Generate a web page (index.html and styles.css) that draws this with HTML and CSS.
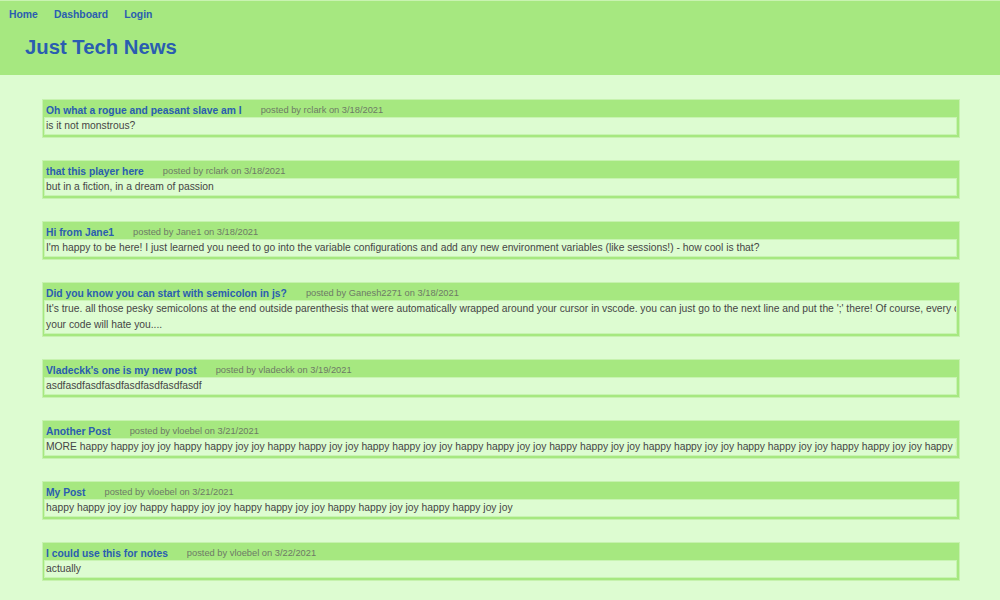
FILE: index.html
```html
<!DOCTYPE html>
<html>
<head>
<meta charset="utf-8">
<link rel="stylesheet" href="styles.css">
</head>
<body>
<header class="site-header">
  <nav class="nav">
    <a href="#">Home</a>
    <a href="#">Dashboard</a>
    <a href="#">Login</a>
  </nav>
  <h1 class="site-title">Just Tech News</h1>
</header>
<main class="posts">
  <article class="post">
    <div class="post-head"><a class="post-title" href="#">Oh what a rogue and peasant slave am I</a><span class="post-meta">posted by rclark on 3/18/2021</span></div>
    <div class="post-body">is it not monstrous?</div>
  </article>
  <article class="post">
    <div class="post-head"><a class="post-title" href="#">that this player here</a><span class="post-meta">posted by rclark on 3/18/2021</span></div>
    <div class="post-body">but in a fiction, in a dream of passion</div>
  </article>
  <article class="post">
    <div class="post-head"><a class="post-title" href="#">Hi from Jane1</a><span class="post-meta">posted by Jane1 on 3/18/2021</span></div>
    <div class="post-body">I'm happy to be here! I just learned you need to go into the variable configurations and add any new environment variables (like sessions!) - how cool is that?</div>
  </article>
  <article class="post">
    <div class="post-head"><a class="post-title" href="#">Did you know you can start with semicolon in js?</a><span class="post-meta">posted by Ganesh2271 on 3/18/2021</span></div>
    <div class="post-body">It's true. all those pesky semicolons at the end outside parenthesis that were automatically wrapped around your cursor in vscode. you can just go to the next line and put the ';' there! Of course, every other developer reading
your code will hate you....</div>
  </article>
  <article class="post">
    <div class="post-head"><a class="post-title" href="#">Vladeckk's one is my new post</a><span class="post-meta">posted by vladeckk on 3/19/2021</span></div>
    <div class="post-body">asdfasdfasdfasdfasdfasdfasdfasdf</div>
  </article>
  <article class="post">
    <div class="post-head"><a class="post-title" href="#">Another Post</a><span class="post-meta">posted by vloebel on 3/21/2021</span></div>
    <div class="post-body">MORE happy happy joy joy happy happy joy joy happy happy joy joy happy happy joy joy happy happy joy joy happy happy joy joy happy happy joy joy happy happy joy joy happy happy joy joy happy happy joy joy happy happy joy joy</div>
  </article>
  <article class="post">
    <div class="post-head"><a class="post-title" href="#">My Post</a><span class="post-meta">posted by vloebel on 3/21/2021</span></div>
    <div class="post-body">happy happy joy joy happy happy joy joy happy happy joy joy happy happy joy joy happy happy joy joy</div>
  </article>
  <article class="post">
    <div class="post-head"><a class="post-title" href="#">I could use this for notes</a><span class="post-meta">posted by vloebel on 3/22/2021</span></div>
    <div class="post-body">actually</div>
  </article>
</main>
</body>
</html>
```

FILE: styles.css
```css
html, body {
  margin: 0;
  padding: 0;
}

body {
  background: #ddfcd1;
  font-family: "Liberation Sans", Arial, sans-serif;
  color: #454545;
  overflow: hidden;
}

a {
  text-decoration: none;
  color: #2a5db0;
}

.site-header {
  background: #a6e880;
  border-top: 1px solid #c9f3b2;
  height: 75px;
  box-sizing: border-box;
}

.nav {
  display: flex;
  gap: 16px;
  padding-left: 9px;
  height: 27px;
  align-items: center;
}

.nav a {
  font-size: 10.4px;
  font-weight: bold;
}

.site-title {
  margin: 0 0 0 25px;
  font-size: 20.3px;
  line-height: 38px;
  font-weight: bold;
  color: #2a5db0;
}

.posts {
  display: flex;
  flex-direction: column;
  gap: 22px;
  padding: 24px 40px 0 42px;
}

.post {
  background: #a6e880;
  border: 1px solid #c6f2ae;
  padding: 0 2px 2px 1px;
}

.post-head {
  height: 17px;
  box-sizing: border-box;
  padding: 3px 0 0 2px;
  display: flex;
  align-items: center;
  white-space: nowrap;
}

.post-title {
  font-size: 10.3px;
  font-weight: bold;
}

.post-meta {
  margin-left: 19px;
  font-size: 9.3px;
  color: #6d7a66;
}

.post-body {
  background: #ddfcd1;
  border: 1px solid #c8f4b2;
  padding: 0 1px;
  font-size: 10.3px;
  line-height: 16px;
  white-space: pre;
  overflow: hidden;
}
```
